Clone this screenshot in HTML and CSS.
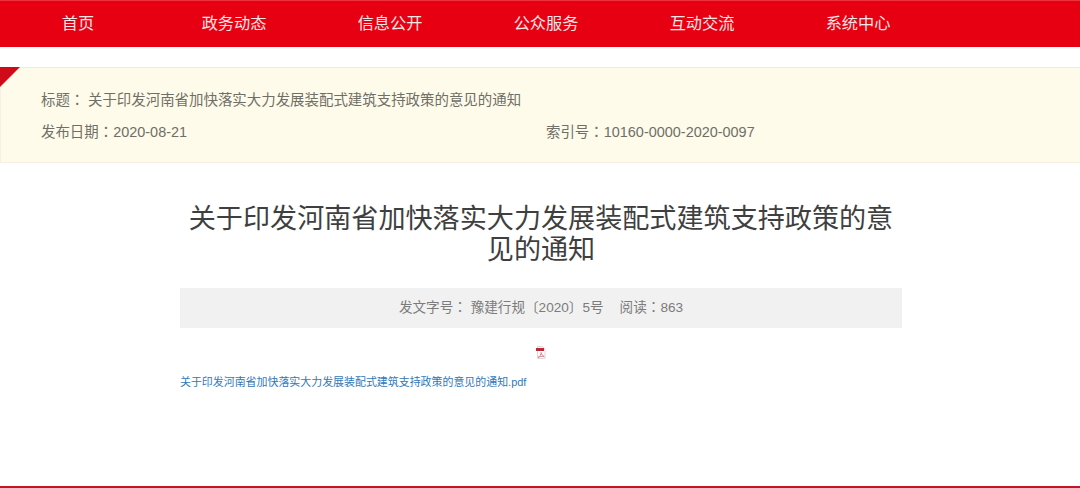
FILE: index.html
```html
<!DOCTYPE html>
<html lang="zh">
<head>
<meta charset="utf-8">
<title>关于印发河南省加快落实大力发展装配式建筑支持政策的意见的通知</title>
<link rel="stylesheet" href="styles.css">
</head>
<body>
<nav class="nav">
  <a class="nav-item">首页</a>
  <a class="nav-item">政务动态</a>
  <a class="nav-item">信息公开</a>
  <a class="nav-item">公众服务</a>
  <a class="nav-item">互动交流</a>
  <a class="nav-item">系统中心</a>
</nav>
<section class="info">
  <span class="corner"></span>
  <div class="info-title"><span class="label">标题<span class="colon" lang="zh-TW">：</span></span>关于印发河南省加快落实大力发展装配式建筑支持政策的意见的通知</div>
  <div class="info-row">
    <div class="info-date">发布日期<span class="colon" lang="zh-TW">：</span>2020-08-21</div>
    <div>索引号<span class="colon" lang="zh-TW">：</span>10160-0000-2020-0097</div>
  </div>
</section>
<main class="article">
  <h1 class="title">关于印发河南省加快落实大力发展装配式建筑支持政策的意见的通知</h1>
  <div class="meta"><span>发文字号<span class="colon" lang="zh-TW">：</span> 豫建行规〔2020〕5号</span><span>阅读<span class="colon" lang="zh-TW">：</span>863</span></div>
  <div class="pdf-icon">
    <svg width="12" height="13" viewBox="0 0 12 13">
      <path d="M2.5 .5h5l2.500 2.500v9.500h-7.500z" fill="#fff" stroke="#dcd6d6"/>
      <rect x="1" y="2" width="8" height="3" fill="#b8283a"/>
      <path d="M3 11.500c2-1 3-3 3.200-5 .4 2 1.500 3.500 3 4-2-.3-4 0-6.200 1z" fill="none" stroke="#d9737f" stroke-width=".9"/>
    </svg>
  </div>
  <a class="file-link">关于印发河南省加快落实大力发展装配式建筑支持政策的意见的通知.pdf</a>
</main>
<footer class="foot"></footer>
</body>
</html>
```
FILE: styles.css
```css
* { box-sizing: border-box; }
html, body { margin: 0; padding: 0; }
body {
  width: 1080px;
  height: 488px;
  overflow: hidden;
  background: #fff;
  font-family: "Liberation Sans", "Noto Sans CJK SC", sans-serif;
  display: flex;
  flex-direction: column;
}
.nav {
  display: flex;
  height: 47px;
  background: #e60012;
  border-top: 1px solid #f0303c;
  flex: none;
}
.nav-item {
  width: 156px;
  text-align: center;
  color: #fbe6e6;
  font-size: 16.2px;
  line-height: 45px;
}
.info {
  position: relative;
  margin-top: 20px;
  height: 96px;
  flex: none;
  background: #fffbea;
  border-top: 1px solid #f2ecd2;
  border-bottom: 1px solid #f5f1e4;
  border-left: 1px solid #f5f1e4;
  padding: 22px 0 0 40px;
  color: #6f6f68;
  font-size: 14.45px;
  line-height: 20px;
}
.colon { font-family: "Noto Sans CJK TC", sans-serif; line-height: 0; }
.corner {
  position: absolute;
  left: -1px;
  top: -1px;
  width: 0;
  height: 0;
  border-top: 20px solid #d00a18;
  border-right: 20px solid transparent;
}
.label { display: inline-block; width: 47px; }
.info-row { display: flex; margin-top: 12px; }
.info-date { width: 505px; }
.article {
  width: 722px;
  margin-left: 180px;
  padding-top: 40px;
  flex: 1;
}
.title {
  margin: 0;
  font-size: 27.1px;
  line-height: 31px;
  font-weight: 400;
  text-align: center;
  color: #3f3f3f;
}
.meta {
  margin-top: 23px;
  height: 40px;
  background: #f1f1f1;
  display: flex;
  justify-content: center;
  align-items: center;
  gap: 16px;
  font-size: 13.6px;
  line-height: 38px;
  color: #7c7c7c;
}
.pdf-icon {
  display: flex;
  justify-content: center;
  margin-top: 18px;
  height: 15px;
}
.file-link {
  display: block;
  margin-top: 14px;
  font-size: 10.95px;
  line-height: 14px;
  color: #2f78ba;
}
.foot {
  height: 2px;
  background: #c4142a;
  flex: none;
}
```
